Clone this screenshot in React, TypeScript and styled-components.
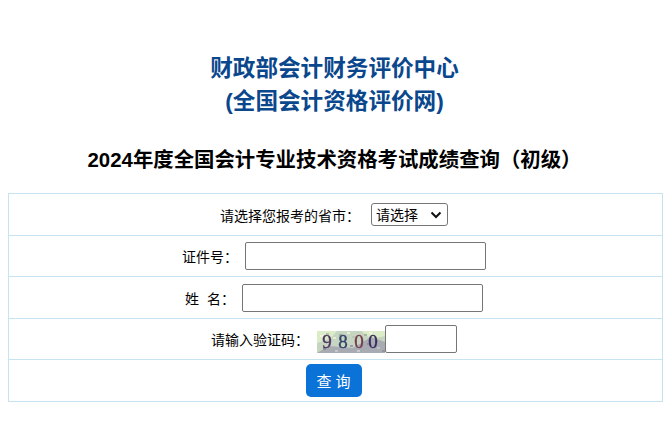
import React from 'react'
import styled, { createGlobalStyle } from 'styled-components'

const GlobalStyle = createGlobalStyle`
    html, body {
        margin: 0;
        padding: 0;
        background: #fff;
        font-family: "Liberation Sans", "Noto Sans CJK SC", sans-serif;
    }
`

const chevron = encodeURIComponent(
    '<svg xmlns="http://www.w3.org/2000/svg" width="12" height="8" viewBox="0 0 12 8"><path d="M1.5 1.5 6 6l4.5-4.5" fill="none" stroke="#111" stroke-width="2"/></svg>'
)

const Page = styled.div`
    width: 671px;
    height: 431px;
    padding: 52px 8px 0;
    box-sizing: border-box;
    overflow: hidden;
`

const Title = styled.h1`
    margin: 0;
    padding-right: 2px;
    font-size: 22.6px;
    line-height: 33px;
    font-weight: 700;
    text-align: center;
    color: #0a478c;
`

const SubTitle = styled.h2`
    margin: 27px 0 18px;
    padding-right: 2px;
    font-size: 20.4px;
    line-height: 30px;
    font-weight: 700;
    text-align: center;
    color: #000;
`

const Form = styled.div`
    border: 1px solid #c5e3f1;
    font-size: 14px;
    color: #000;
`

const Row = styled.div<{ $h?: number }>`
    height: ${p => p.$h ?? 41}px;
    display: flex;
    align-items: center;
    justify-content: center;
    border-bottom: 1px solid #c5e3f1;
    &:last-child {
        border-bottom: none;
    }
`

const Label = styled.span<{ $gap?: number }>`
    margin-right: ${p => p.$gap ?? 7}px;
    white-space: pre;
`

const Select = styled.select`
    appearance: none;
    width: 77px;
    height: 23px;
    margin-right: 3px;
    padding: 0 0 0 4px;
    font: 14px "Liberation Sans", "Noto Sans CJK SC", sans-serif;
    background: #fff url("data:image/svg+xml,${chevron}") no-repeat right 5px center;
    color: #000;
    border: 1px solid #767676;
    border-radius: 3px;
`

const Input = styled.input<{ $w: number }>`
    width: ${p => p.$w}px;
    height: 28px;
    box-sizing: border-box;
    margin-right: 3px;
    padding: 1px 2px;
    background: #fff;
    border: 1px solid #767676;
    border-radius: 2px;
`

const Captcha = styled.svg`
    display: block;
    width: 68px;
    height: 22px;
    margin-top: 6px;
    filter: blur(0.35px);
`

const QueryButton = styled.button`
    width: 56px;
    height: 33px;
    margin-right: 4px;
    padding: 0;
    border: none;
    border-radius: 5px;
    background: #0b72d7;
    color: #fff;
    font: 15px "Liberation Sans", "Noto Sans CJK SC", sans-serif;
    white-space: pre;
`

const digits = [
    { c: '9', x: 10, color: '#4f3560' },
    { c: '8', x: 26, color: '#36456a' },
    { c: '0', x: 42, color: '#743a4c' },
    { c: '0', x: 56, color: '#35295c' },
]

// speckle over the captcha background
const specks = [
    [3, 4, '#eef5dc'], [9, 2, '#b4c6a8'], [16, 6, '#e4eed2'], [22, 3, '#9fb29a'],
    [30, 1, '#e8f0d6'], [35, 5, '#b9c8b0'], [47, 3, '#a6b6a0'], [52, 1, '#eef5dc'],
    [62, 7, '#c2d2b4'], [6, 17, '#8f929c'], [18, 19, '#c4c6cc'], [33, 14, '#9a9ca6'],
    [40, 19, '#c8cad0'], [50, 12, '#8d8f9a'], [60, 16, '#c0c2ca'], [65, 19, '#94969f'],
] as const

export default function App() {
    return (
        <Page>
            <GlobalStyle />
            <Title>财政部会计财务评价中心</Title>
            <Title>(全国会计资格评价网)</Title>
            <SubTitle>2024年度全国会计专业技术资格考试成绩查询（初级）</SubTitle>
            <Form>
                <Row>
                    <Label $gap={11}>请选择您报考的省市：</Label>
                    <Select defaultValue="">
                        <option value="">请选择</option>
                    </Select>
                </Row>
                <Row $h={40}>
                    <Label>证件号：</Label>
                    <Input $w={241} />
                </Row>
                <Row>
                    <Label>{'姓  名：'}</Label>
                    <Input $w={241} />
                </Row>
                <Row $h={40}>
                    <Label $gap={8}>请输入验证码：</Label>
                    <Captcha viewBox="0 0 68 22">
                        <rect width="68" height="22" fill="#c6d4c2" />
                        <path d="M0 0h20l-6 7-14 5zM44 0h24v5l-14 3z" fill="#dcebc8" />
                        <path d="M0 22l12-7 24 2 18-11 14 5v11z" fill="#a9abb2" />
                        {specks.map(([x, y, fill]) => (
                            <rect key={`${x}-${y}`} x={x} y={y} width="3" height="2" fill={fill} />
                        ))}
                        {digits.map(d => (
                            <text
                                key={d.x}
                                x={d.x}
                                y="17"
                                fontFamily="Liberation Serif, serif"
                                fontSize="19"
                                textAnchor="middle"
                                stroke={d.color}
                                strokeWidth="0.4"
                                fill={d.color}
                            >
                                {d.c}
                            </text>
                        ))}
                    </Captcha>
                    <Input $w={72} />
                </Row>
                <Row>
                    <QueryButton>{'查 询'}</QueryButton>
                </Row>
            </Form>
        </Page>
    )
}
